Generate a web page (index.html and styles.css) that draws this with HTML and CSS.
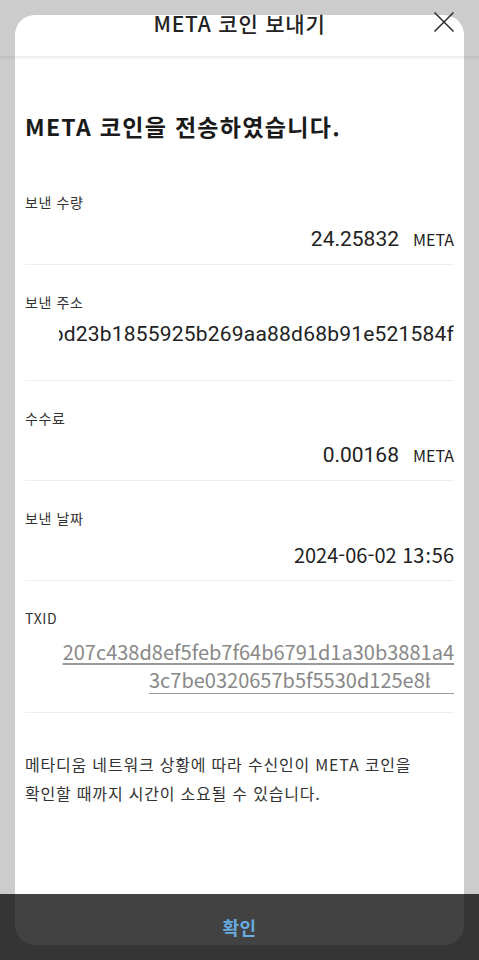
FILE: index.html
```html
<!DOCTYPE html>
<html lang="ko">
<head>
    <meta charset="UTF-8">
    <meta name="viewport" content="width=device-width, initial-scale=1.0">
    <title>META 코인 보내기</title>
    <link rel="stylesheet" href="styles.css">
</head>
<body>
    <div class="screen">
        <div class="sheet">
            <h2 class="done-title">META 코인을 전송하였습니다.</h2>

            <div class="row">
                <div class="row-label">보낸 수량</div>
                <div class="row-value">
                    <span class="amount">24.25832</span>
                    <span class="unit">META</span>
                </div>
            </div>

            <div class="row row-address">
                <div class="row-label">보낸 주소</div>
                <div class="row-value address-box">
                    <span class="address">0x4e8bd23b1855925b269aa88d68b91e521584f</span>
                </div>
            </div>

            <div class="row">
                <div class="row-label">수수료</div>
                <div class="row-value">
                    <span class="amount">0.00168</span>
                    <span class="unit">META</span>
                </div>
            </div>

            <div class="row">
                <div class="row-label">보낸 날짜</div>
                <div class="row-value">
                    <span class="date">2024-06-02 13<span class="colon">:</span>56</span>
                </div>
            </div>

            <div class="row row-txid">
                <div class="row-label">TXID</div>
                <div class="txid">
                    <div class="txid-line"><span class="txid-text">207c438d8ef5feb7f64b6791d1a30b3881a4</span></div>
                    <div class="txid-line"><span class="txid-text txid-cut"><span class="txid-clip">3c7be0320657b5f5530d125e8b</span></span></div>
                </div>
            </div>

            <p class="notice">메타디움 네트워크 상황에 따라 수신인이 META 코인을<br>확인할 때까지 시간이 소요될 수 있습니다.</p>
        </div>

        <header class="topbar">
            <div class="topbar-title">META 코인 보내기</div>
            <button class="close-btn" aria-label="닫기">
                <svg width="20" height="20" viewBox="0 0 20 20">
                    <path d="M0.5 0.5 L19.5 19.5 M19.5 0.5 L0.5 19.5" stroke="#2b2b2b" stroke-width="1.5" fill="none"/>
                </svg>
            </button>
        </header>

        <div class="bottom-bar">
            <button class="confirm-btn">확인</button>
        </div>
    </div>
</body>
</html>
```

FILE: styles.css
```css
body {
    margin: 0;
    font-family: "Noto Sans CJK KR", "Noto Sans", sans-serif;
    color: #222222;
    background-color: #cccccc;
}

.screen {
    position: relative;
    width: 479px;
    height: 960px;
    overflow: hidden;
}

.sheet {
    margin: 15px 15px 0;
    height: 930px;
    padding: 0 10px;
    box-sizing: border-box;
    background-color: #FFFFFF;
    border-radius: 20px;
}

.done-title {
    margin: 0 0 23px;
    padding-top: 95px;
    font-size: 23px;
    font-weight: 700;
    line-height: 32px;
    letter-spacing: 1.3px;
    color: #1a1a1a;
}

.row {
    padding: 27px 0 11px;
    border-bottom: 1px solid #eeeeee;
}

.row-label {
    font-size: 14px;
    line-height: 20px;
    letter-spacing: 0.6px;
    color: #333333;
}

.row-value {
    display: flex;
    justify-content: flex-end;
    align-items: baseline;
    margin-top: 13px;
    height: 28px;
    line-height: 28px;
}

.amount {
    font-family: Roboto, "Noto Sans CJK KR", sans-serif;
    font-size: 21px;
    color: #222222;
}

.unit {
    margin-left: 14px;
    font-size: 16px;
    color: #222222;
}

.date {
    font-size: 20px;
    color: #222222;
}

.date .colon {
    font-family: "Noto Sans", sans-serif;
    padding: 0 1px;
}

.row-address {
    padding-bottom: 32px;
}

.row-address .row-value {
    margin-top: 8px;
}

.address-box {
    margin-left: 34px;
    overflow: hidden;
    white-space: nowrap;
}

.address {
    flex-shrink: 0;
    font-family: Roboto, "Noto Sans CJK KR", sans-serif;
    font-size: 21px;
    letter-spacing: 0.2px;
    color: #222222;
}

.row-txid {
    padding-bottom: 15px;
}

.txid {
    margin-top: 9px;
    text-align: right;
}

.txid-line {
    line-height: 30px;
    font-size: 20px;
    color: #888888;
}

.txid-text {
    text-decoration: underline;
    text-decoration-color: #999999;
    text-underline-offset: 3px;
}

.txid-cut {
    display: inline-block;
    width: 305px;
    text-align: left;
    text-decoration: none;
    border-bottom: 1px solid #999999;
    line-height: 26px;
    vertical-align: top;
}

.txid-clip {
    display: inline-block;
    width: 281px;
    overflow: hidden;
    white-space: nowrap;
    vertical-align: top;
}

.notice {
    margin: 37px 0 0;
    font-size: 16px;
    line-height: 29px;
    letter-spacing: 0.8px;
    color: #333333;
}

.topbar {
    position: absolute;
    top: 0;
    left: 0;
    right: 0;
    height: 56px;
    display: flex;
    justify-content: center;
}

.topbar::after {
    content: "";
    position: absolute;
    left: 0;
    right: 0;
    top: 56px;
    height: 4px;
    background: linear-gradient(rgba(0, 0, 0, 0.07), rgba(0, 0, 0, 0));
}

.topbar-title {
    margin-top: 9px;
    font-size: 21px;
    font-weight: 500;
    line-height: 28px;
    letter-spacing: 0.8px;
    color: #222222;
}

.close-btn {
    position: absolute;
    top: 12px;
    right: 25px;
    padding: 0;
    width: 20px;
    height: 20px;
    border: none;
    background: none;
    cursor: pointer;
}

.close-btn svg {
    display: block;
}

.bottom-bar {
    position: absolute;
    left: 0;
    right: 0;
    bottom: 0;
    height: 66px;
    display: flex;
    align-items: center;
    justify-content: center;
    background-color: rgba(0, 0, 0, 0.74);
}

.confirm-btn {
    padding: 0;
    border: none;
    background: none;
    font-family: "Noto Sans CJK KR", sans-serif;
    font-size: 18px;
    font-weight: 700;
    letter-spacing: 0.5px;
    color: #68abe0;
    cursor: pointer;
}
```
